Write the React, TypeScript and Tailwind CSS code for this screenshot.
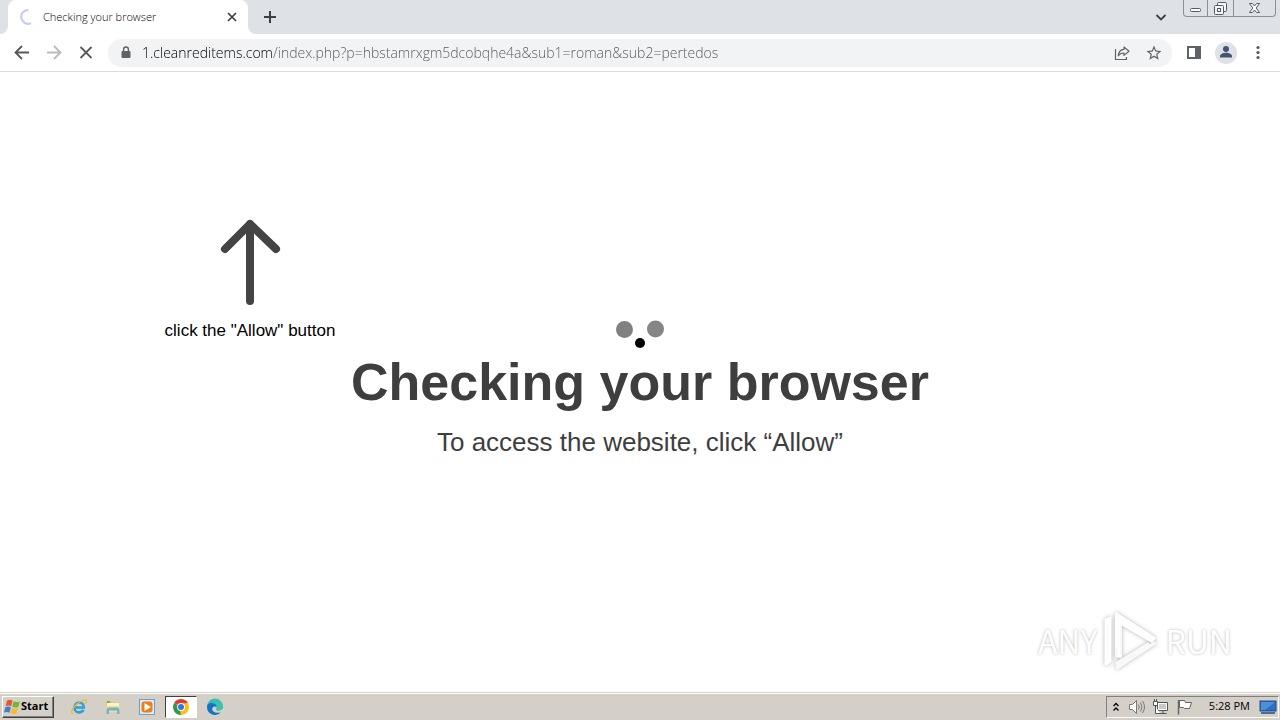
import React from 'react';

const PAGE_URL = '1.cleanreditems.com/index.php?p=hbstamrxgm5dcobqhe4a&sub1=roman&sub2=pertedos';

interface IconButtonProps {
  label: string;
  className?: string;
  children: React.ReactNode;
}

function IconButton({ label, className = 'w-8', children }: IconButtonProps) {
  return (
    <button type="button" aria-label={label} className={`flex h-7 shrink-0 items-center justify-center ${className}`}>
      {children}
    </button>
  );
}

function TabStrip() {
  return (
    <div className="flex h-[34px] shrink-0 bg-[#dee1e6]">
      <svg className="w-2 self-end" height="8" viewBox="0 0 8 8" fill="#fff">
        <path d="M8 0v8H0a8 8 0 0 0 8-8z" />
      </svg>
      <div className="flex w-60 items-center rounded-t-lg bg-white pl-3 pr-2">
        <svg width="16" height="16" viewBox="0 0 16 16" fill="none" stroke="#c3cbf0" strokeWidth="2">
          <path d="M11 14.2A7 7 0 0 1 3 3.2 7 7 0 0 1 8.500 1" />
        </svg>
        <span className="ml-[7px] flex-1 truncate text-[11px] font-light text-black">Checking your browser</span>
        <IconButton label="Close tab" className="w-4">
          <svg width="16" height="16" viewBox="0 0 16 16" stroke="#3c4043" strokeWidth="1.7">
            <path d="M4 4l8 8M12 4l-8 8" />
          </svg>
        </IconButton>
      </div>
      <svg className="w-2 self-end" height="8" viewBox="0 0 8 8" fill="#fff">
        <path d="M0 0v8h8a8 8 0 0 1-8-8z" />
      </svg>
      <IconButton label="New tab" className="w-7 self-center">
        <svg width="14" height="14" viewBox="0 0 14 14" stroke="#3c4043" strokeWidth="2">
          <path d="M7 1v12M1 7h12" />
        </svg>
      </IconButton>
      <div className="flex-1" />
      <IconButton label="Search tabs" className="w-7 self-center">
        <svg width="12" height="12" viewBox="0 0 12 12" fill="none" stroke="#3c4043" strokeWidth="1.8">
          <path d="M1.500 4l4.500 4.500L10.500 4" />
        </svg>
      </IconButton>
      <div className="ml-2 mr-1 flex h-[17px] overflow-hidden rounded-b border border-t-0 border-[#8b9097]">
        <IconButton label="Minimize" className="w-6 self-center border-r border-[#8b9097]">
          <svg width="13" height="17" viewBox="0 0 13 17" fill="#fff" stroke="#555b66">
            <rect x="1.500" y="8.500" width="10" height="3" rx="1" />
          </svg>
        </IconButton>
        <IconButton label="Restore" className="w-[26px] self-center border-r border-[#8b9097]">
          <svg width="15" height="17" viewBox="0 0 15 17" fill="#f4f5f7" stroke="#555b66">
            <rect x="4.500" y="2.500" width="9" height="9" rx="1" />
            <rect x="1.500" y="5.500" width="9" height="9" rx="1" />
            <rect x="4.500" y="8.500" width="3" height="3" />
          </svg>
        </IconButton>
        <IconButton label="Close" className="w-[41px] self-center">
          <svg width="13" height="17" viewBox="0 0 13 17" fill="#fff" stroke="#555b66">
            <path d="M1.500 3.500h3l2 2.500 2-2.500h3l-3.300 4.500 3.300 4.500h-3l-2-2.500-2 2.500h-3L4.800 8z" />
          </svg>
        </IconButton>
      </div>
    </div>
  );
}

function Toolbar() {
  return (
    <div className="flex h-[38px] shrink-0 items-center border-b border-[#dadce0] bg-white px-1.5">
      <IconButton label="Back">
        <svg width="20" height="20" viewBox="0 0 20 20" fill="none" stroke="#55595d" strokeWidth="1.8">
          <path d="M17 9.500H4M10 3L3.500 9.500 10 16" />
        </svg>
      </IconButton>
      <IconButton label="Forward">
        <svg width="20" height="20" viewBox="0 0 20 20" fill="none" stroke="#b9bbbe" strokeWidth="1.8">
          <path d="M3 9.500h13M10 3l6.500 6.500L10 16" />
        </svg>
      </IconButton>
      <IconButton label="Stop">
        <svg width="20" height="20" viewBox="0 0 20 20" stroke="#55595d" strokeWidth="1.8">
          <path d="M4.500 4l11 11M15.500 4l-11 11" />
        </svg>
      </IconButton>

      <div className="mx-1.5 flex h-7 flex-1 items-center rounded-full bg-[#f1f3f4] pl-2.5 pr-0.5">
        <svg width="16" height="16" viewBox="0 0 16 16" className="shrink-0">
          <rect x="3.500" y="6" width="9" height="7" rx="1" fill="#5f6368" />
          <path d="M5.600 6.500V4.400a2.400 2.400 0 0 1 4.800 0v2.100" fill="none" stroke="#5f6368" strokeWidth="1.400" />
        </svg>
        {/* host part is darker than the path */}
        <input
          type="text"
          aria-label="Address"
          defaultValue={PAGE_URL}
          className="ml-2 h-6 min-w-0 flex-1 bg-[linear-gradient(90deg,#000000_131px,#54585d_131px)] bg-clip-text text-[14px] font-light text-transparent outline-none"
        />
        <IconButton label="Share">
          <svg width="18" height="18" viewBox="0 0 18 18" fill="none" stroke="#5f6368" strokeWidth="1.200">
            <path d="M2.500 5v10.500h11V13" />
            <path d="M11 3l5 4.200-5 4.200V9c-3 0-4.500.8-5.700 2.800C5.500 8.500 7.300 5.600 11 5.300z" strokeLinejoin="round" />
          </svg>
        </IconButton>
        <IconButton label="Bookmark this tab">
          <svg width="18" height="18" viewBox="0 0 24 24" fill="#5f6368">
            <path d="M22 9.240l-7.190-.62L12 2 9.190 8.630 2 9.240l5.460 4.730L5.820 21 12 17.270 18.180 21l-1.630-7.030L22 9.240zM12 15.400l-3.760 2.270 1-4.280-3.320-2.880 4.380-.38L12 6.100l1.710 4.040 4.380.38-3.320 2.880 1 4.280L12 15.400z" />
          </svg>
        </IconButton>
      </div>

      <IconButton label="Side panel">
        <svg width="16" height="16" viewBox="0 0 16 16">
          <rect x="2" y="2" width="12" height="11" fill="none" stroke="#5f6368" strokeWidth="2" />
          <path d="M9 2h5v11H9z" fill="#5f6368" />
        </svg>
      </IconButton>
      <IconButton label="Profile">
        <svg width="22" height="22" viewBox="0 0 22 22">
          <circle cx="11" cy="11" r="11" fill="#dee1e6" />
          <circle cx="11" cy="7" r="3" fill="#47536f" />
          <path d="M5 15.500v-1.400c0-2 3-3.300 6-3.300s6 1.300 6 3.300v1.400z" fill="#47536f" />
        </svg>
      </IconButton>
      <IconButton label="Menu">
        <svg width="4" height="16" viewBox="0 0 4 16" fill="#55595d">
          <circle cx="2" cy="2.500" r="1.600" />
          <circle cx="2" cy="7.500" r="1.600" />
          <circle cx="2" cy="12.500" r="1.600" />
        </svg>
      </IconButton>
    </div>
  );
}

function Watermark() {
  return (
    <div className="col-start-1 row-start-1 mb-5 mr-12 flex items-center gap-1 self-end justify-self-end font-['Noto_Sans_CJK_JP',sans-serif] text-[32px] leading-none text-white [text-shadow:0_0_3px_#b4b4b4]">
      <span>ANY</span>
      <svg width="60" height="64" viewBox="0 0 60 64" fill="none" strokeLinejoin="round" strokeLinecap="round" className="drop-shadow-[0_0_2px_#b4b4b4]">
        <path d="M9 10L5 12v44l4-3z" fill="#fafafa" stroke="#fff" strokeWidth="3" />
        <path d="M15 48V5l39 25-3 4-31-18v33z" fill="#fff" stroke="#fff" strokeWidth="2" />
        <path d="M20 16v31M15 40v12" stroke="#f0f0f0" />
        <path d="M54 35L16 60v-5l31-19" fill="#f6f6f6" stroke="#f9f9f9" strokeWidth="3" />
      </svg>
      <span>RUN</span>
    </div>
  );
}

function PageContent() {
  return (
    <main className="grid min-h-0 flex-1 bg-white font-['Liberation_Sans',Arial,sans-serif] text-[#3e3e3e]">
      <div className="col-start-1 row-start-1 ml-[150px] mt-36 flex w-50 flex-col items-center self-start justify-self-start">
        <svg width="64" height="92" viewBox="0 0 64 92" fill="none" stroke="#444" strokeWidth="8" strokeLinecap="round" strokeLinejoin="round">
          <path d="M32 85V8M7 33L32 8l26 25" />
        </svg>
        <p className="mt-3 whitespace-nowrap text-[17px] leading-[22px] text-black">click the "Allow" button</p>
      </div>

      <div className="col-start-1 row-start-1 flex flex-col items-center self-center justify-self-center pt-3.5">
        <svg width="50" height="30" viewBox="0 0 50 30">
          <circle cx="9.500" cy="9.500" r="8.500" fill="#808080" />
          <circle cx="40.500" cy="9" r="8.500" fill="#868686" />
          <circle cx="25" cy="23" r="5" fill="#000" />
        </svg>
        <h1 className="text-[52px] font-bold leading-[64px]">Checking your browser</h1>
        <p className="mt-3 text-[26px] leading-8">To access the website, click “Allow”</p>
      </div>

      <Watermark />
    </main>
  );
}

function ChromeIcon() {
  return (
    <svg width="16" height="16" viewBox="0 0 16 16">
      <path d="M8 8L1.100 4A8 8 0 0 1 14.900 4z" fill="#e33b2e" />
      <path d="M8 8l6.900-4A8 8 0 0 1 8 16z" fill="#fbc116" />
      <path d="M8 8v8A8 8 0 0 1 1.100 4z" fill="#2a9c48" />
      <path d="M8 4.300h7L11.200 10 8 16l-1-4z" fill="#fbc116" />
      <circle cx="8" cy="8" r="3.900" fill="#fff" />
      <circle cx="8" cy="8" r="3" fill="#2f74e0" />
    </svg>
  );
}

function Taskbar() {
  return (
    <footer className="flex h-7 shrink-0 items-center border-t border-[#d4d0c8] bg-[#d4d0c8] pl-0.5 pr-px shadow-[inset_0_1px_0_#ffffff]">
      <button
        type="button"
        className="flex h-[22px] w-[52px] items-center border border-b-[#404040] border-l-white border-r-[#404040] border-t-white pl-px text-[11px] font-bold text-black shadow-[inset_-1px_-1px_0_#808080]"
      >
        <svg width="17" height="16" viewBox="0 0 16 16" className="shrink-0">
          <path d="M2.500 1.500c2.300-1 4-.8 5.500.2L6.700 7.300c-1.600-1-3.400-1-5.500-.2z" fill="#e5582b" />
          <path d="M9 2.300c1.800 1 3.800 1 6.300.1L13.800 8c-2.200.9-4.200.8-6-.2z" fill="#75b43b" />
          <path d="M.9 8.200c2-.8 3.900-.8 5.500.2L5 13.800c-1.600-1-3.400-1-5.500-.2z" fill="#3d7fd0" />
          <path d="M7.400 8.900c1.800 1 4 1.100 6.200.2L12 14.500c-2.200.9-4.200.8-6-.2z" fill="#f5bd2e" />
        </svg>
        Start
      </button>

      <nav aria-label="Quick launch" className="ml-2 flex">
        <IconButton label="Internet Explorer" className="w-[34px]">
          <svg width="18" height="18" viewBox="0 0 18 18" fill="none">
            <path d="M4.500 9.500h9.300c0-3-2-5-4.600-5S4.500 6.700 4.500 9.700s2 4.700 4.600 4.700c2 0 3.500-.8 4.300-2.600" stroke="#319fdc" strokeWidth="2.600" />
            <path d="M3 15.500C0 15 2.500 9.500 7 6s9-5.500 9.500-3c.2.900-.3 2-1 3" stroke="#ebb92e" strokeWidth="1.300" />
          </svg>
        </IconButton>
        <IconButton label="Windows Explorer" className="w-[34px]">
          <svg width="18" height="18" viewBox="0 0 18 18">
            <path d="M2 3h5l1 1.500h7V14H2z" fill="#e9c45a" />
            <path d="M3 5h12v3H3z" fill="#fbf3c8" />
            <path d="M2 8h14v6H2z" fill="#f5db83" />
            <path d="M2.500 16v-4c0-1.500 1-2.500 2.500-2.500h8c1.500 0 2.500 1 2.500 2.500v4H13v-3.500H5V16z" fill="#71b2dc" />
            <path d="M3 4h3" stroke="#59a75b" strokeWidth="1.500" />
          </svg>
        </IconButton>
        <IconButton label="Media Player" className="w-[34px]">
          <svg width="18" height="18" viewBox="0 0 18 18">
            <rect x="1.500" y="1.500" width="15" height="15" fill="#d9edf8" stroke="#6ca0c7" />
            <rect x="3.500" y="3.500" width="11" height="11" rx="3" fill="#ef7d16" />
            <path d="M6.500 5v8L13 9z" fill="#fff" />
          </svg>
        </IconButton>
        <button
          type="button"
          aria-label="Google Chrome"
          className="mx-px flex h-[22px] w-8 items-center justify-center self-center border border-b-white border-l-[#404040] border-r-white border-t-[#404040] bg-white"
        >
          <ChromeIcon />
        </button>
        <IconButton label="Microsoft Edge" className="w-[34px]">
          <svg width="18" height="18" viewBox="0 0 18 18">
            <path d="M1 9a8 8 0 0 1 16-.8c0 3-2.200 4.300-4.600 4.300-2 0-2.700-.8-2.100-1.500 1.200-1.500.2-4-2.200-4C5.300 7 2 8 1 9z" fill="#35b9c6" />
            <path d="M9 1a8 8 0 0 1 8 7.200c0 3-2.200 4.300-4.600 4.300-2 0-2.700-.8-2.100-1.500C12 8.500 11 3 5 2.500 6 1.500 7.500 1 9 1z" fill="#3fc3a8" />
            <path d="M1 9c0-3 3-4.300 5.500-3.800 2.700.4 4.300 2 4.200 4-2-1.700-4.700-.5-4.500 2 .2 3 4 4.400 8.800 3A8 8 0 0 1 1 9z" fill="#1672c4" />
          </svg>
        </IconButton>
      </nav>

      <div className="ml-auto flex h-[22px] items-center border border-b-white border-l-[#808080] border-r-white border-t-[#808080] text-[11px] text-black">
        <IconButton label="Show hidden icons" className="w-[18px]">
          <svg width="8" height="10" viewBox="0 0 8 10" fill="none" stroke="#000" strokeWidth="1.300">
            <path d="M1.500 4L4 1.500 6.500 4M1.500 8.500L4 6l2.500 2.500" />
          </svg>
        </IconButton>
        <IconButton label="Volume" className="w-6">
          <svg width="18" height="16" viewBox="0 0 18 16" fill="none" stroke="#777">
            <path d="M1.500 5.500h3l4-4v13l-4-4h-3z" fill="#fff" />
            <path d="M10.500 5.500q1.500 2.500 0 5M12.500 3.500q3 4.500 0 9M14.500 2q4 6 0 12" />
          </svg>
        </IconButton>
        <IconButton label="Network" className="w-6">
          <svg width="18" height="16" viewBox="0 0 18 16" fill="#fff" stroke="#555">
            <path d="M5.500 3.500h10v8h-10zM7.500 14.500h7M11 12v2" />
            <path d="M7 5h7v5H7z" fill="#c9c9c9" stroke="none" />
            <path d="M1.500 2.500h4v4h-4zM2.500 0v2M4.500 0v2M3.500 7v7.500H8" />
          </svg>
        </IconButton>
        <IconButton label="Action Center" className="w-6">
          <svg width="18" height="16" viewBox="0 0 18 16" fill="#fff" stroke="#666">
            <path d="M3.500 1.500h5l1 2h6l-2 6h-5l-1-1h-4z" />
            <path d="M2.500 1v14.500" strokeWidth="1.500" />
          </svg>
        </IconButton>
        <span className="ml-3 whitespace-nowrap">5:28 PM</span>
        <IconButton label="Show desktop" className="ml-2 w-5">
          <svg width="18" height="16" viewBox="0 0 18 16">
            <rect x="1" y="2" width="16" height="10" fill="#2c6fc4" stroke="#1d4d8f" />
            <path d="M2 3h14L6 11H2z" fill="#4c90dc" />
            <path d="M2 14h14" stroke="#234a7d" strokeWidth="1.500" />
          </svg>
        </IconButton>
      </div>
    </footer>
  );
}

export default function App() {
  return (
    <div className="flex h-screen flex-col overflow-hidden font-['Open_Sans','Noto_Sans',sans-serif]">
      <TabStrip />
      <Toolbar />
      <PageContent />
      <Taskbar />
    </div>
  );
}
